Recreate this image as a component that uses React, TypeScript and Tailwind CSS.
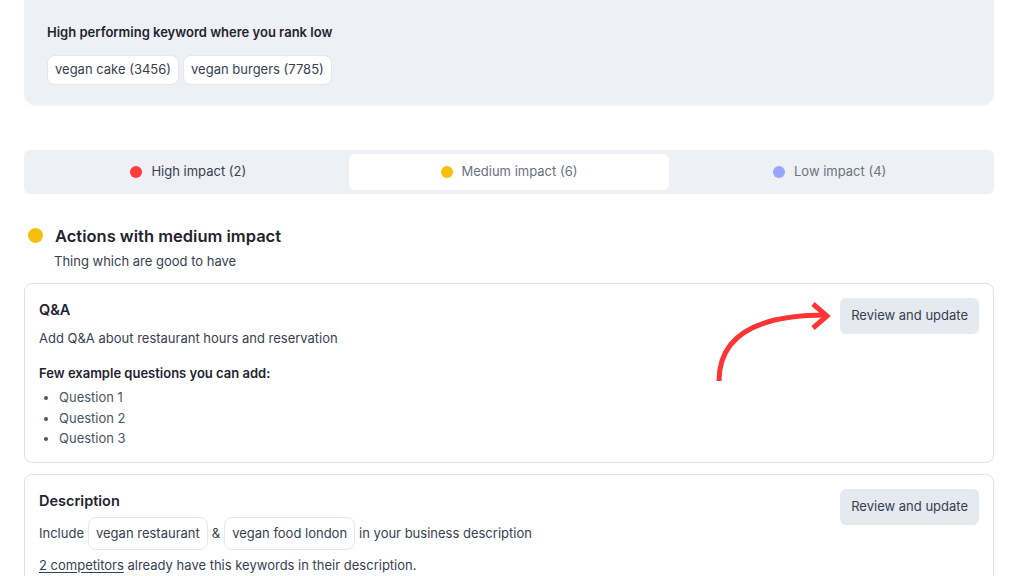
import React from 'react';

const chip = 'rounded-lg border border-[#e3e6ec] bg-white px-[7px] text-[13px] text-[#374151]';

function Tab({ dot, label, active, dark }: { dot: string; label: string; active?: boolean; dark?: boolean }) {
  return (
    <div
      className={`flex h-9 items-center justify-center gap-[9px] rounded-md text-[13px] ${
        active ? 'bg-white' : ''
      } ${dark ? 'text-[#374151]' : 'text-[#6b7280]'}`}
    >
      <span className={`h-3 w-3 rounded-full ${dot}`} />
      {label}
    </div>
  );
}

// red hand-drawn style arrow pointing at the button
function Arrow() {
  return (
    <svg
      className="pointer-events-none absolute left-[680px] top-[15px]"
      width="130"
      height="90"
      viewBox="0 0 130 90"
      fill="none"
    >
      <path d="M14 82 C 14 42, 44 16, 121 16" stroke="#ff3434" strokeWidth="5" />
      <path d="M108 5 L 122 17 L 108 29" stroke="#ff3434" strokeWidth="5" />
    </svg>
  );
}

export default function App() {
  return (
    <div className="min-h-[576px] w-[1024px] overflow-hidden bg-white font-['Inter',sans-serif] text-[#1f2430]">
      <div className="ml-[24px] mr-[30px] rounded-b-xl bg-[#eef0f5] px-[23px] pb-[20px] pt-[24px] shadow-[0_1px_2px_rgba(0,0,0,0.04)]">
        <p className="text-[13px] font-semibold leading-4">High performing keyword where you rank low</p>
        <div className="mt-[15px] flex gap-[4px]">
          <span className={`${chip} py-[4px]`}>vegan cake (3456)</span>
          <span className={`${chip} py-[4px]`}>vegan burgers (7785)</span>
        </div>
      </div>

      <div className="ml-[24px] mr-[30px] mt-[45px] grid grid-cols-3 rounded-md bg-[#eef0f5] p-[4px]">
        <Tab dot="bg-[#ff3b3b]" label="High impact (2)" dark />
        <Tab dot="bg-[#f6bf10]" label="Medium impact (6)" active />
        <Tab dot="bg-[#98a4ff]" label="Low impact (4)" />
      </div>

      <div className="ml-[24px] mr-[30px] mt-[32px]">
        <div className="flex items-center gap-[12px] pl-[4px]">
          <span className="h-[15px] w-[15px] rounded-full bg-[#f6bf10]" />
          <h2 className="text-[16.5px] font-semibold leading-5">Actions with medium impact</h2>
        </div>
        <p className="mt-[6px] pl-[30px] text-[13px] text-[#374151]">Thing which are good to have</p>

        <div className="relative mt-[12px] flex rounded-lg border border-[#dde1e8] px-[14px] pb-[13px] pt-[14px]">
          <div className="flex-1">
            <h3 className="mt-[2px] text-[14.5px] font-semibold leading-5">Q&amp;A</h3>
            <p className="mt-[9px] text-[13px] text-[#374151]">Add Q&amp;A about restaurant hours and reservation</p>
            <p className="mt-[15px] text-[13px] font-semibold">Few example questions you can add:</p>
            <ul className="mt-[4px] list-disc pl-[20px] text-[13px] leading-[20.5px] text-[#4b5563]">
              <li>Question 1</li>
              <li>Question 2</li>
              <li>Question 3</li>
            </ul>
          </div>
          <button className="h-9 self-start rounded-md bg-[#e6e9ef] px-[11px] text-[13px] text-[#374151]">
            Review and update
          </button>
          <Arrow />
        </div>

        <div className="mt-[11px] flex rounded-lg border border-[#dde1e8] px-[14px] pb-[12px] pt-[14px]">
          <div className="flex-1">
            <h3 className="mt-[2px] text-[14.5px] font-semibold leading-5">Description</h3>
            <div className="mt-[6px] flex items-center gap-[4px] text-[13px] text-[#374151]">
              <span>Include</span>
              <span className={`${chip} py-[6px]`}>vegan restaurant</span>
              <span>&amp;</span>
              <span className={`${chip} py-[6px]`}>vegan food london</span>
              <span>in your business description</span>
            </div>
            <p className="mt-[6px] text-[13px] text-[#374151]">
              <span className="underline underline-offset-2">2 competitors</span> already have this keywords in their
              description.
            </p>
          </div>
          <button className="h-9 self-start rounded-md bg-[#e6e9ef] px-[11px] text-[13px] text-[#374151]">
            Review and update
          </button>
        </div>
      </div>
    </div>
  );
}
